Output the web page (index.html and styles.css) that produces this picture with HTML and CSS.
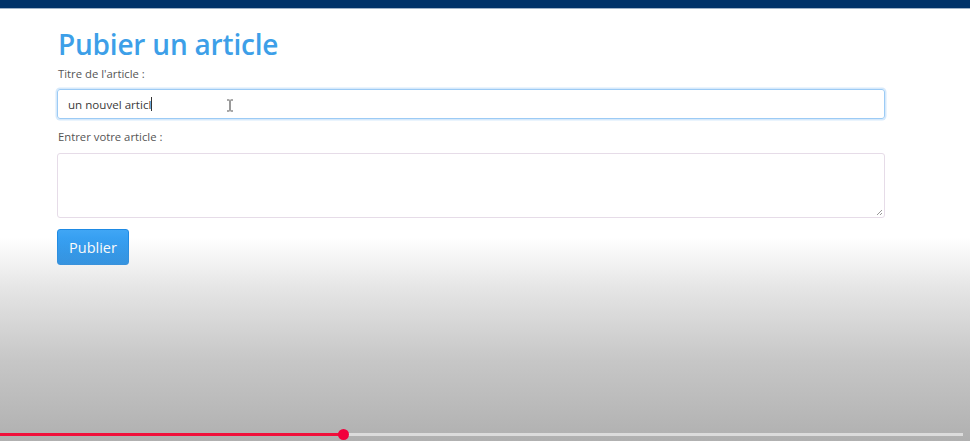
FILE: index.html
```html
<!DOCTYPE html>
<html lang="fr">
<head>
<meta charset="utf-8">
<title>Publier un article</title>
<link rel="stylesheet" href="styles.css">
</head>
<body>
<div class="topbar"></div>
<main class="container">
  <h1 class="title">Pubier un article</h1>
  <form class="form">
    <label class="label" for="titre">Titre de l'article :</label>
    <div class="input focus">
      <span class="value">un nouvel articl</span><span class="caret"></span>
      <svg class="ibeam" width="8" height="13" viewBox="0 0 8 13"><path d="M1 1h2.5M4.5 1H7M4 1.5v10M1 12h2.5M4.5 12H7" stroke="#555" stroke-width="1.2" fill="none"/></svg>
    </div>
    <label class="label label-2" for="contenu">Entrer votre article :</label>
    <div class="textarea">
      <svg class="grip" width="8" height="8" viewBox="0 0 8 8"><path d="M7 2L2 7M7 5L5 7" stroke="#999" stroke-width="1"/></svg>
    </div>
    <button type="button" class="btn">Publier</button>
  </form>
</main>
<div class="shade"></div>
<div class="progress">
  <div class="played"></div>
  <div class="knob"></div>
  <div class="rest"></div>
</div>
</body>
</html>
```
FILE: styles.css
```css
html, body {
  margin: 0;
  padding: 0;
  background: #fff;
  width: 970px;
  height: 441px;
  overflow: hidden;
  font-family: "Open Sans", "Noto Sans", sans-serif;
}
.topbar {
  height: 8px;
  background: #003269;
  border-bottom: 1px solid #9fb2c8;
}
.container {
  margin-left: 57px;
  width: 828px;
}
.title {
  margin: 16px 0 0 1px;
  font-size: 28px;
  font-weight: 600;
  color: #3d9fe8;
  line-height: 38px;
  letter-spacing: -0.2px;
}
.form {
  display: flex;
  flex-direction: column;
  align-items: flex-start;
}
.label {
  margin: 3px 0 0 1px;
  font-size: 11.3px;
  color: #555;
  line-height: 16px;
}
.label-2 { margin-top: 10px; }
.input {
  position: relative;
  box-sizing: border-box;
  margin-top: 7px;
  width: 828px;
  height: 30px;
  border: 1px solid #9ccbf5;
  border-radius: 3px;
  box-shadow: 0 0 0 1.5px #d6e9fb;
  display: flex;
  align-items: center;
  padding-left: 10px;
  font-size: 11.6px;
  color: #3a3a3a;
}
.caret {
  display: inline-block;
  width: 1px;
  height: 14px;
  background: #333;
}
.ibeam {
  position: absolute;
  left: 168px;
  top: 9px;
}
.textarea {
  position: relative;
  box-sizing: border-box;
  margin-top: 8px;
  width: 828px;
  height: 65px;
  border: 1px solid #e6dce8;
  border-radius: 3px;
}
.grip {
  position: absolute;
  right: 1px;
  bottom: 1px;
}
.btn {
  margin-top: 11px;
  width: 72px;
  height: 36px;
  border: 1px solid #1e8ae4;
  border-radius: 3px;
  background: linear-gradient(#40a6f5, #1b8ce8);
  color: #fff;
  font-family: inherit;
  font-size: 14.5px;
  padding: 0;
}
.shade {
  position: absolute;
  left: 0;
  right: 0;
  top: 238px;
  bottom: 0;
  background: linear-gradient(rgba(180,180,180,0) 0%, rgba(180,180,180,0.35) 25%, rgba(180,180,180,0.75) 60%, rgba(176,176,176,1) 100%);
  pointer-events: none;
}
.progress {
  position: absolute;
  left: 0;
  width: 963px;
  top: 433px;
  height: 3px;
  display: flex;
  align-items: center;
}
.played {
  width: 343px;
  height: 3px;
  background: #f00f3a;
}
.knob {
  width: 11px;
  height: 11px;
  border-radius: 50%;
  background: #f2003c;
  margin-left: -5px;
  margin-right: -6px;
  position: relative;
  z-index: 1;
}
.rest {
  flex: 1;
  height: 3px;
  background: #dcdcdc;
}
```
